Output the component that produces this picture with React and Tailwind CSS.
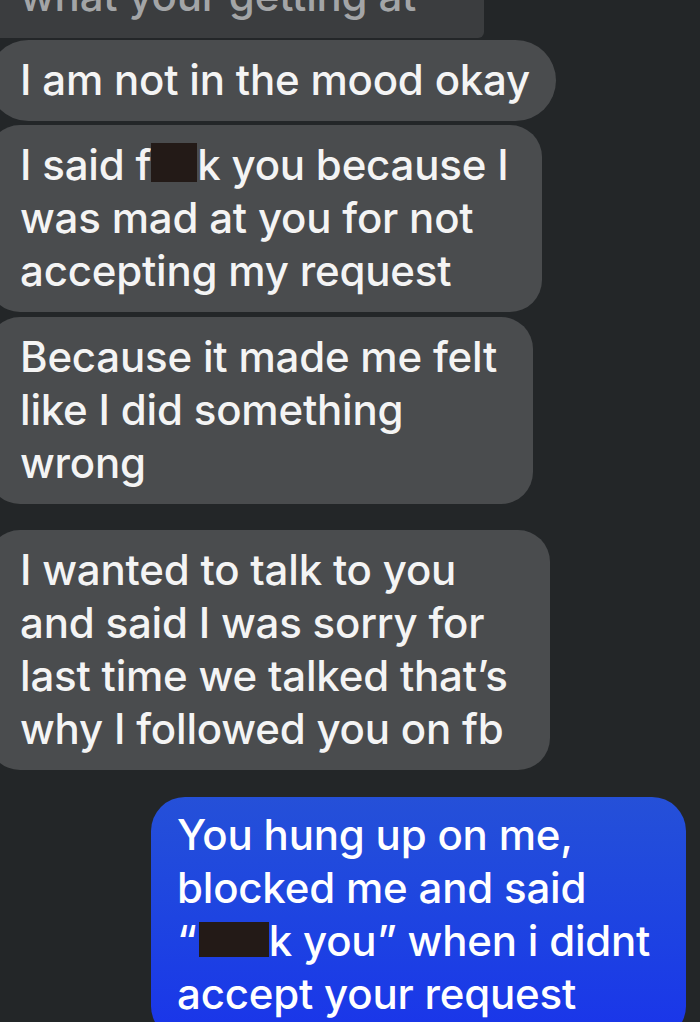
const font = { fontFamily: 'Inter, "Liberation Sans", Arial, sans-serif' }

function Redact({ className }) {
  return <span className={`inline-block bg-[#231a17] ${className}`} />
}

function Incoming({ width, children, className = "rounded-[32px]" }) {
  return (
    <div
      className={`-ml-[12px] bg-[#4a4c4e] pl-[32px] pt-[13px] pb-[15px] text-[#f4f4f4] ${width} ${className}`}
    >
      {children}
    </div>
  )
}

export default function App() {
  return (
    <div
      className="h-[1022px] w-[700px] overflow-hidden bg-[#232628] text-[42px] leading-[53px] font-medium tracking-[-0.2px]"
      style={font}
    >
      <div className="flex flex-col">
        {/* previous message, scrolled mostly off the top */}
        <div className="-ml-[12px] flex h-[38px] w-[496px] items-end overflow-hidden rounded-br-[6px] bg-[#3b3d3f] pl-[32px] pb-[16px] text-[#a3a5a7]">
          <span className="whitespace-nowrap">what your getting at</span>
        </div>

        <div className="mt-[2px]">
          <Incoming width="w-[568px]" className="rounded-[42px]">
            I am not in the mood okay
          </Incoming>
        </div>

        <div className="mt-[4px]">
          <Incoming width="w-[554px]">
            I said f<Redact className="h-[39px] w-[46px] align-[-2px]" />k you because I
            <br />
            was mad at you for not
            <br />
            accepting my request
          </Incoming>
        </div>

        <div className="mt-[5px]">
          <Incoming width="w-[545px]">
            Because it made me felt
            <br />
            like I did something
            <br />
            wrong
          </Incoming>
        </div>

        <div className="mt-[26px]">
          <Incoming width="w-[562px]">
            I wanted to talk to you
            <br />
            and said I was sorry for
            <br />
            last time we talked that’s
            <br />
            why I followed you on fb
          </Incoming>
        </div>

        <div className="mt-[27px] flex justify-end pr-[14px]">
          <div className="w-[535px] rounded-[34px] bg-linear-to-b from-[#2550d8] to-[#1a34ea] pl-[26px] pt-[11px] pb-[20px] text-white">
            You hung up on me,
            <br />
            blocked me and said
            <br />
            “<Redact className="ml-[2px] h-[35px] w-[70px] align-[-1px]" />k you” when i didnt
            <br />
            accept your request
          </div>
        </div>
      </div>
    </div>
  )
}
